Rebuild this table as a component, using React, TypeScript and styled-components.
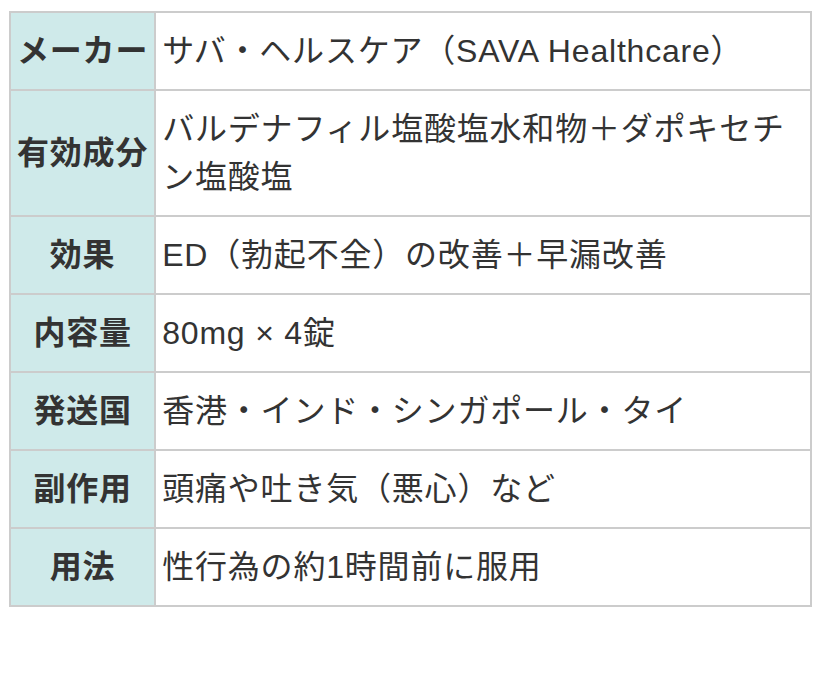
import React from "react";
import styled, { createGlobalStyle } from "styled-components";

const Global = createGlobalStyle`
  html, body { margin: 0; padding: 0; background: #fff; }
  body {
    font-family: "Liberation Sans", "Noto Sans CJK JP", sans-serif;
    color: #333;
  }
`;

const Page = styled.div`
  padding: 11px 8px 0 9px;
`;

const Table = styled.table`
  width: 803px;
  border-collapse: collapse;
  font-size: 32px;
  line-height: 48px;
  letter-spacing: 0.8px;
`;

const Head = styled.th`
  width: 130px;
  background: #cfeaea;
  border: 2px solid #cccccc;
  padding: 14px 6px;
  font-weight: bold;
  text-align: center;
  vertical-align: middle;
  white-space: nowrap;
  color: #333;
`;

const Cell = styled.td`
  border: 2px solid #cccccc;
  padding: 14px 14px 14px 6px;
  text-align: left;
  vertical-align: middle;
  color: #333;
`;

const rows: [string, string][] = [
  ["メーカー", "サバ・ヘルスケア（SAVA Healthcare）"],
  ["有効成分", "バルデナフィル塩酸塩水和物＋ダポキセチン塩酸塩"],
  ["効果", "ED（勃起不全）の改善＋早漏改善"],
  ["内容量", "80mg × 4錠"],
  ["発送国", "香港・インド・シンガポール・タイ"],
  ["副作用", "頭痛や吐き気（悪心）など"],
  ["用法", "性行為の約1時間前に服用"],
];

export default function App() {
  return (
    <Page>
      <Global />
      <Table>
        <tbody>
          {rows.map(([h, v]) => (
            <tr key={h}>
              <Head>{h}</Head>
              <Cell>{v}</Cell>
            </tr>
          ))}
        </tbody>
      </Table>
    </Page>
  );
}
